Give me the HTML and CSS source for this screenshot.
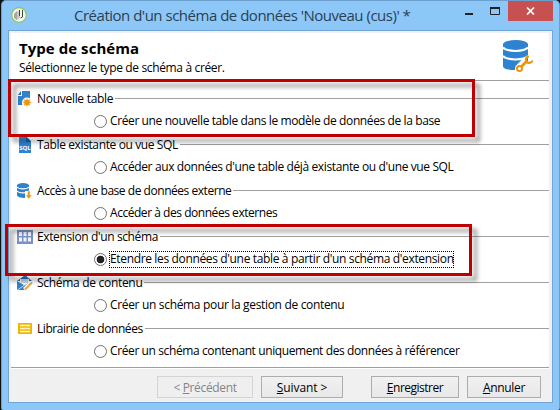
FILE: index.html
```html
<!DOCTYPE html>
<html lang="fr">
<head>
<meta charset="utf-8">
<title>Création d'un schéma de données</title>
<link rel="stylesheet" href="styles.css">
</head>
<body>
<div class="window">
  <header class="titlebar">
    <svg class="app-icon" viewBox="0 0 16 16"><circle cx="8" cy="8" r="7.300" fill="#f3f5ee" stroke="#8fc65a" stroke-width="1.200"/><path d="M3 7l3-3v9l-3-2z" fill="#a5a8a3"/><path d="M6 4h3v7l-3 2z" fill="#c8cac5"/><path d="M8.500 3v6M11.500 3v7l-2 1" fill="none" stroke="#3c4a40" stroke-width="1"/></svg>
    <h1 class="caption"><span class="t-caption">Création d'un schéma de données 'Nouveau (cus)' *</span></h1>
    <div class="controls">
      <svg class="window-controls" viewBox="0 0 48 20"><path d="M5 13h8" stroke="#222" stroke-width="2"/><path d="M30.500 7.500h9v6h-9z" fill="none" stroke="#222"/><path d="M30 7h10" stroke="#222" stroke-width="2"/></svg>
      <span class="close"><svg viewBox="0 0 9 8"><path d="M1 .5l7 7M8 .5l-7 7" stroke="#fff" stroke-width="1.700"/></svg></span>
    </div>
  </header>
  <main class="client">
    <div class="page">
      <div class="intro">
        <div>
          <h2 class="heading"><span class="t-heading">Type de schéma</span></h2>
          <p class="sub"><span class="t-sub">Sélectionnez le type de schéma à créer.</span></p>
        </div>
        <svg class="hero" viewBox="0 0 32 34"><path d="M1 5v22c0 3 5 4 12 4 1-5 8-8 13-8V5z" fill="#2e83d0"/><ellipse cx="13.500" cy="5.500" rx="12.500" ry="4.500" fill="#2e83d0"/><path d="M1 8.500c4 4.500 21 4.500 25 0M1 17c4 4.500 21 4.500 25 0" fill="none" stroke="#fff" stroke-width="2"/><path d="M18 29l7-7" stroke="#fff" stroke-width="9"/><circle cx="17.500" cy="29.500" r="4.500" fill="#fff"/><circle cx="17.500" cy="29.500" r="2.500" fill="none" stroke="#ee960b" stroke-width="2"/><path d="M19.500 27.500l5-5" stroke="#ee960b" stroke-width="3"/><path d="M27 17.500c-3 0-4 3-2.500 5s5 2 6-1" fill="none" stroke="#ee960b" stroke-width="2.200"/></svg>
      </div>
      <div class="options">
        <section class="option">
          <div class="legend"><svg viewBox="0 0 18 18"><path d="M6 1h8v14H2V6h4z" fill="#2e83d0"/><path d="M2 5l3-4v4z" fill="#2e69a5"/><circle cx="11" cy="12.500" r="5" fill="#fff"/><circle cx="11" cy="12.500" r="2.800" fill="#ee960b"/><path d="M11 8.500v8M7 12.500h8M8.200 9.700l5.600 5.600M13.800 9.700l-5.600 5.600" stroke="#ee960b" stroke-width="1.100"/></svg><span class="label l1">Nouvelle table</span></div>
          <label class="choice"><i class="radio"></i><span class="text t1">Créer une nouvelle table dans le modèle de données de la base</span></label>
        </section>
        <section class="option">
          <div class="legend"><svg viewBox="0 0 18 18"><path d="M3 1h8l4 4v12H3z" fill="#2e83d0"/><path d="M10 1v5h5z" fill="#1d5f9d"/><text x="9" y="14" text-anchor="middle" class="sql">SQL</text></svg><span class="label l2">Table existante ou vue SQL</span></div>
          <label class="choice"><i class="radio"></i><span class="text t2">Accéder aux données d'une table déjà existante ou d'une vue SQL</span></label>
        </section>
        <section class="option">
          <div class="legend"><svg viewBox="0 0 18 18"><path d="M1 3v10c0 2 4 3 8 3V9h4V3z" fill="#2e83d0"/><ellipse cx="7" cy="3.500" rx="6" ry="2.500" fill="#2e83d0"/><path d="M1 5c2 2.500 10 2.500 12 0M1 9c2 2.500 10 2.500 12 0" fill="none" stroke="#fff" stroke-width="1.100"/><path d="M11.500 9v4H9.500l3.300 4 3.300-4h-2V9z" fill="#ee960b" stroke="#fff" stroke-width=".5"/></svg><span class="label l3">Accès à une base de données externe</span></div>
          <label class="choice"><i class="radio"></i><span class="text t3">Accéder à des données externes</span></label>
        </section>
        <section class="option">
          <div class="legend"><svg viewBox="0 0 18 18"><path d="M1 2h16v14H1z" fill="#7892c4"/><path d="M3 4h3v4H3zM7.500 4h3v4h-3zM12 4h3v4h-3zM3 9.500h3v4H3zM7.500 9.500h3v4h-3zM12 9.500h3v4h-3z" fill="#f1f4fa"/></svg><span class="label l4">Extension d'un schéma</span></div>
          <label class="choice"><i class="radio checked"></i><span class="text t4 focused">Etendre les données d'une table à partir d'un schéma d'extension</span></label>
        </section>
        <section class="option">
          <div class="legend"><svg viewBox="0 0 18 18"><path d="M1 7l8-6 7 6z" fill="#286cad"/><path d="M4 5h9v5H4z" fill="#fff"/><path d="M5 6h7M5 8h7" stroke="#8bb8df"/><path d="M1 7l7 4-7 5zM2 16l7-5 5-3v2l-6 6z" fill="#2e83d0"/><path d="M8.500 15.500l7-7" stroke="#fff" stroke-width="4"/><path d="M9 15.500l7-7" stroke="#efa431" stroke-width="2"/></svg><span class="label l5">Schéma de contenu</span></div>
          <label class="choice"><i class="radio"></i><span class="text t5">Créer un schéma pour la gestion de contenu</span></label>
        </section>
        <section class="option">
          <div class="legend"><svg viewBox="0 0 18 18"><path d="M2 3h14v11H2z" fill="#efb800"/><path d="M4 5.500h10M4 8.500h10M4 11.500h10" stroke="#fff5cb" stroke-width="1.400"/></svg><span class="label l6">Librairie de données</span></div>
          <label class="choice"><i class="radio"></i><span class="text t6">Créer un schéma contenant uniquement des données à référencer</span></label>
        </section>
      </div>
    </div>
    <footer class="actions">
      <button class="btn prev" disabled><span>&lt; <u>P</u>récédent</span></button>
      <button class="btn next"><span><u>S</u>uivant &gt;</span></button>
      <button class="btn save"><span><u>E</u>nregistrer</span></button>
      <button class="btn cancel"><span><u>A</u>nnuler</span></button>
    </footer>
  </main>
  <div class="highlight first"></div>
  <div class="highlight second"></div>
</div>
</body>
</html>
```
FILE: styles.css
```css
* { box-sizing: border-box; }
body { margin: 0; width: 560px; height: 410px; overflow: hidden; background: #111; font: 12px "Open Sans", "Noto Sans", sans-serif; color: #000; }
.window { position: relative; width: 559px; height: 410px; margin-left: 1px; background: #8dc7f8; border: 1px solid #6a9fce; border-bottom: 0; border-radius: 5px 5px 2px 2px; padding: 0 6px 7px; display: flex; flex-direction: column; }
.titlebar { height: 29px; flex: none; display: flex; }
.app-icon { width: 16px; height: 16px; margin: 6px 0 0 3px; }
.caption { margin: 0 0 0 47px; font-size: 15px; line-height: 29px; font-weight: 400; color: #2b3f50; white-space: nowrap; width: 338px; }
.t-caption { letter-spacing: -.49px; }
.controls { display: flex; margin-left: auto; }
.window-controls { width: 48px; height: 20px; }
.close { width: 45px; height: 20px; background: #c75050; display: flex; align-items: center; justify-content: center; }
.close svg { width: 9px; height: 8px; }
.client { flex: 1; border: 1px solid #70a5d5; background: #f0f0f0; padding: 2px 3px 0 2px; }
.page { height: 335px; background: #fff; border-bottom: 1px solid #a0a0a0; }
.intro { height: 48px; display: flex; justify-content: space-between; border-bottom: 1px solid #a0a0a0; padding: 4px 15px 0 8px; }
.heading { margin: 0; height: 22px; line-height: 23px; font-size: 15px; white-space: nowrap; }
.t-heading { letter-spacing: .05px; }
.sub { margin: 0; line-height: 18px; white-space: nowrap; }
.t-sub { letter-spacing: -.36px; }
.hero { width: 32px; height: 34px; margin-top: 2px; }
.options { padding-top: 6px; }
.option { height: 46px; }
.legend { height: 23px; display: flex; align-items: center; padding-left: 5px; }
.legend svg { width: 18px; height: 18px; flex: none; }
.label { margin-left: 3px; line-height: 22px; white-space: nowrap; }
.legend::after { content: ""; flex: 1; height: 1px; background: #a0a0a0; margin-left: 2px; }
.choice { height: 23px; display: flex; align-items: center; padding-left: 83px; }
.radio { width: 13px; height: 13px; flex: none; border: 1px solid #707070; border-radius: 50%; background: #fff; }
.checked { background: radial-gradient(circle, #222 0 3.5px, #fff 4.2px); }
.text { margin-left: 2px; height: 17px; line-height: 16px; padding-left: 1px; white-space: nowrap; }
.l1 { letter-spacing: -.29px; }
.l2 { letter-spacing: -.38px; }
.l3 { letter-spacing: -.46px; }
.l4 { letter-spacing: -.38px; }
.l5 { letter-spacing: -.3px; }
.l6 { letter-spacing: -.45px; }
.t1 { letter-spacing: -.39px; }
.t2 { letter-spacing: -.38px; }
.t3 { letter-spacing: -.46px; }
.t4 { letter-spacing: -.35px; }
.t5 { letter-spacing: -.33px; }
.t6 { letter-spacing: -.39px; }
.focused { outline: 1px dotted #000; outline-offset: -1px; }
.sql { font: bold 6px "Open Sans", sans-serif; fill: #fff; }
.actions { display: flex; border-top: 1px solid #fff; padding: 7px 8px 0 146px; }
.btn { height: 22px; padding: 0; border: 1px solid #adadad; background: linear-gradient(#f1f1f1, #e8e8e8); font: inherit; color: #000; white-space: nowrap; display: flex; align-items: center; justify-content: center; }
.btn:disabled { color: #858585; border-color: #d4d4d4; background: #efefef; }
.prev { width: 96px; letter-spacing: -.35px; }
.next { width: 82px; margin-left: 8px; letter-spacing: -.1px; }
.save { width: 88px; margin-left: 28px; letter-spacing: -.5px; }
.cancel { width: 74px; margin-left: 8px; letter-spacing: -.3px; }
.highlight { position: absolute; border: 3px solid #c00000; filter: drop-shadow(5px 5px 2px rgba(0, 0, 0, .4)); }
.first { left: 6px; top: 78px; width: 467px; height: 58px; }
.second { left: 3px; top: 223px; width: 467px; height: 52px; }
```
